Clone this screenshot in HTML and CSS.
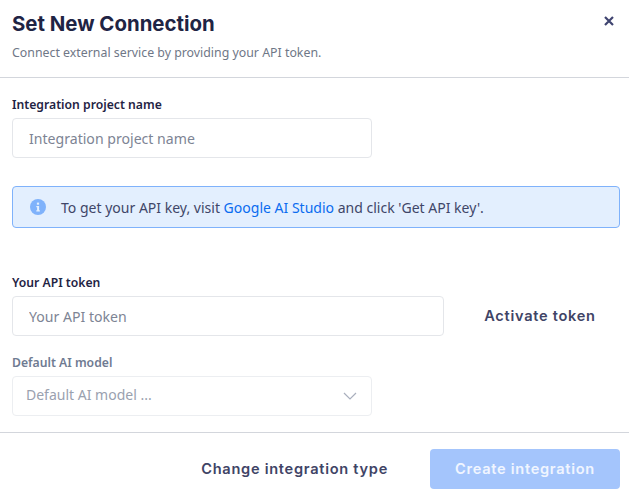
FILE: index.html
```html
<!DOCTYPE html>
<html lang="en">
<head>
<meta charset="utf-8">
<title>Set New Connection</title>
<link rel="stylesheet" href="styles.css">
</head>
<body>
<div class="modal">
  <header class="head">
    <div class="head-text">
      <h1 class="title">Set New Connection</h1>
      <p class="sub">Connect external service by providing your API token.</p>
    </div>
    <button class="close" aria-label="Close">
      <svg width="10" height="10" viewBox="0 0 10 10"><path d="M1 1l8 8M9 1l-8 8" stroke="#3f4470" stroke-width="2.2" fill="none"/></svg>
    </button>
  </header>
  <main class="body">
    <label class="label">Integration project name</label>
    <input class="input short" placeholder="Integration project name">
    <div class="alert">
      <svg class="info" width="16" height="16" viewBox="0 0 16 16"><circle cx="8" cy="8" r="8" fill="#7fb2fb"/><rect x="6.9" y="3.6" width="2.2" height="2.1" fill="#e3effe"/><path d="M6.3 7h2.8v4.2h.8v1.2H6.3v-1.2h.8V8.2h-.8z" fill="#e3effe"/></svg>
      <span>To get your API key, visit <a class="link" href="#">Google AI Studio</a> and click 'Get API key'.</span>
    </div>
    <label class="label token-label">Your API token</label>
    <div class="token-row">
      <input class="input grow" placeholder="Your API token">
      <button class="text-btn activate">Activate token</button>
    </div>
    <label class="label muted model-label">Default AI model</label>
    <div class="select short">
      <span class="select-text">Default AI model ...</span>
      <svg width="14" height="8" viewBox="0 0 14 8"><path d="M1 1l6 6 6-6" stroke="#a9afbd" stroke-width="1.2" fill="none"/></svg>
    </div>
  </main>
  <footer class="foot">
    <button class="text-btn">Change integration type</button>
    <button class="primary">Create integration</button>
  </footer>
</div>
</body>
</html>
```
FILE: styles.css
```css
* { box-sizing: border-box; }
html, body { margin: 0; height: 100%; background: #fff; }
body { font-family: "Noto Sans", "Open Sans", sans-serif; color: #1f2444; overflow: hidden; }
.modal { width: 629px; height: 503px; display: flex; flex-direction: column; }
.head { height: 78px; border-bottom: 1px solid #d3d6dc; padding: 12px 12px 0; display: flex; justify-content: space-between; align-items: flex-start; }
.title { margin: 0; font-family: Inter, sans-serif; font-size: 20.4px; line-height: 24px; font-weight: 700; color: #1f2444; }
.sub { margin: 8px 0 0; font-size: 12.35px; line-height: 18px; color: #6f7787; }
.close { border: 0; background: none; padding: 0; margin: 4px 0 0; width: 16px; height: 10px; display: flex; justify-content: center; cursor: pointer; }
.body { flex: 1; padding: 18px 9px 0 12px; display: flex; flex-direction: column; align-items: flex-start; }
.label { font-size: 12.2px; line-height: 18px; font-weight: 600; color: #1f2444; display: block; height: 22px; }
.label.muted { color: #6f7b92; }
.input { height: 40px; border: 1px solid #e4e6ea; border-radius: 4px; padding: 0 16px; font: 14.1px "Noto Sans", sans-serif; color: #1f2444; background: #fff; outline: 0; }
.input::placeholder { color: #7d8494; opacity: 1; }
.short { width: 360px; }
.grow { width: 432px; }
.alert { width: 608px; height: 42px; margin-top: 28px; display: flex; align-items: center; gap: 15px; padding-left: 17px; background: #e3effe; border: 1px solid #7fb2fb; border-radius: 4px; font-size: 14.03px; color: #3f4668; }
.link { color: #0a6cf0; text-decoration: none; }
.token-label { margin-top: 46px; }
.token-row { display: flex; align-items: center; width: 608px; }
.text-btn { border: 0; background: none; padding: 0; font-family: Inter, sans-serif; font-weight: 600; font-size: 14.6px; letter-spacing: .72px; color: #3f4466; cursor: pointer; }
.activate { flex: 1; text-align: center; padding-left: 16px; }
.model-label { margin-top: 18px; }
.select { height: 40px; border: 1px solid #eceef1; border-radius: 4px; padding: 0 14px 0 13px; display: flex; align-items: center; justify-content: space-between; font-size: 14px; color: #9aa1af; }
.select-text { line-height: 18px; margin-top: -2px; }
.foot { height: 71px; border-top: 1px solid #d3d6dc; display: flex; align-items: flex-start; justify-content: flex-end; padding: 16px 9px 0 0; gap: 42px; }
.foot .text-btn { height: 40px; }
.primary { width: 190px; height: 40px; border: 0; border-radius: 4px; background: #a4c5fc; color: #f0f5ff; font-family: Inter, sans-serif; font-weight: 600; font-size: 14.6px; letter-spacing: .72px; }
```
